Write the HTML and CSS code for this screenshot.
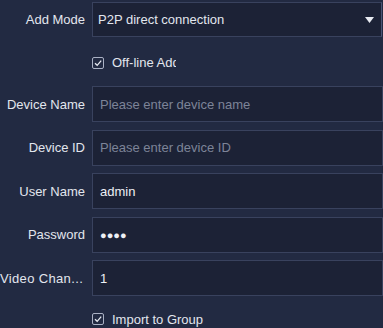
FILE: index.html
```html
<!DOCTYPE html>
<html>
<head>
<meta charset="utf-8">
<link rel="stylesheet" href="styles.css">
</head>
<body>
<div class="form">
  <div class="row row-select">
    <div class="label">Add Mode</div>
    <div class="select">
      <span class="value">P2P direct connection</span>
      <svg class="arrow" width="9" height="6" viewBox="0 0 9 6"><path d="M0 0H9L4.5 6Z" fill="#e8ebf2"/></svg>
    </div>
  </div>
  <div class="row row-check check-top">
    <div class="label"></div>
    <label class="check">
      <span class="box"><svg width="12" height="12" viewBox="0 0 12 12"><rect x="0.5" y="0.5" width="11" height="11" rx="1.5" fill="none" stroke="#aab1c4"/><path d="M3 6.2L5.2 8.3L9.2 3.6" fill="none" stroke="#e6e9f0" stroke-width="1.3"/></svg></span>
      <span class="clip">Off-line Add</span>
    </label>
  </div>
  <div class="fields">
    <div class="row">
      <div class="label">Device Name</div>
      <div class="input placeholder">Please enter device name</div>
    </div>
    <div class="row">
      <div class="label">Device ID</div>
      <div class="input placeholder">Please enter device ID</div>
    </div>
    <div class="row">
      <div class="label">User Name</div>
      <div class="input">admin</div>
    </div>
    <div class="row">
      <div class="label">Password</div>
      <div class="input dots">●●●●</div>
    </div>
    <div class="row">
      <div class="label wide">Video Chan...</div>
      <div class="input">1</div>
    </div>
  </div>
  <div class="row row-check check-bottom">
    <div class="label"></div>
    <label class="check">
      <span class="box"><svg width="12" height="12" viewBox="0 0 12 12"><rect x="0.5" y="0.5" width="11" height="11" rx="1.5" fill="none" stroke="#aab1c4"/><path d="M3 6.2L5.2 8.3L9.2 3.6" fill="none" stroke="#e6e9f0" stroke-width="1.3"/></svg></span>
      <span>Import to Group</span>
    </label>
  </div>
</div>
</body>
</html>
```
FILE: styles.css
```css
html, body {
  margin: 0;
  padding: 0;
  background: #222a42;
  width: 383px;
  height: 328px;
  overflow: hidden;
}
body {
  font-family: "Liberation Sans", Arial, sans-serif;
  font-size: 13px;
  color: #e2e6ee;
}
.form {
  padding-top: 2px;
  display: flex;
  flex-direction: column;
}
.row {
  display: flex;
  align-items: center;
  gap: 7px;
}
.label {
  width: 85px;
  flex: none;
  text-align: right;
  white-space: nowrap;
  overflow: hidden;
}
.wide {
  letter-spacing: 0.35px;
  text-align: left;
}
.select {
  flex: 1;
  height: 33px;
  border: 1px solid #39425e;
  border-right-color: #4a5475;
  background: #1c2236;
  display: flex;
  align-items: center;
  justify-content: space-between;
  padding: 0 7px 0 5px;
  margin-right: 1px;
}
.arrow {
  margin-top: 1px;
}
.check-top {
  height: 23px;
  margin-top: 14px;
}
.check {
  display: flex;
  align-items: center;
  gap: 8px;
  color: #e2e6ee;
}
.box {
  width: 12px;
  height: 12px;
  display: block;
  flex: none;
}
.box svg { display: block; }
.clip {
  display: block;
  width: 64px;
  overflow: hidden;
  white-space: nowrap;
}
.fields {
  margin-top: 12px;
  display: flex;
  flex-direction: column;
  gap: 7.5px;
}
.input {
  flex: 1;
  height: 34px;
  border: 1px solid #39425e;
  background: #1c2236;
  display: flex;
  align-items: center;
  padding: 0 7px;
  color: #eef0f5;
}
.placeholder {
  color: #7c8498;
}
.dots {
  font-size: 11px;
  letter-spacing: 0;
}
.check-bottom {
  height: 20px;
  margin-top: 13px;
}
```
